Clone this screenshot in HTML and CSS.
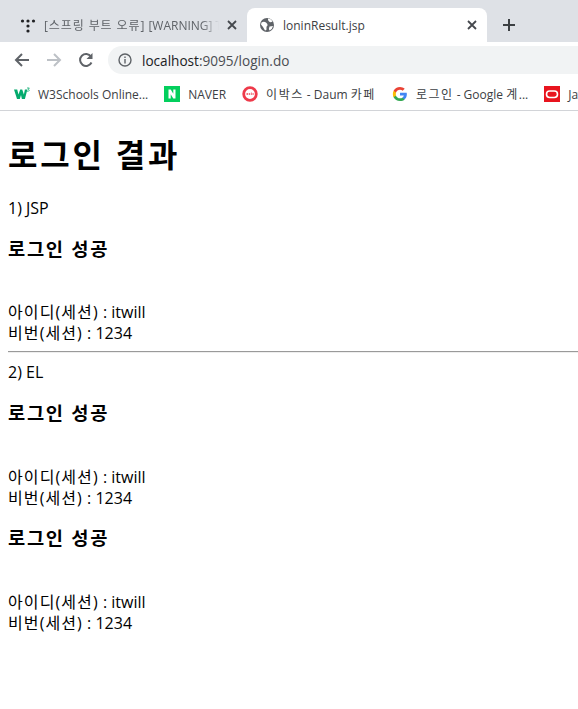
FILE: index.html
```html
<!DOCTYPE html>
<html lang="ko">
<head>
<meta charset="UTF-8">
<title>loninResult.jsp</title>
<link rel="stylesheet" href="styles.css">
</head>
<body>

<div class="browser">
    <div class="tabstrip">
        <div class="tab">
            <svg class="favicon" width="16" height="16" viewBox="0 0 16 16"><g fill="#202124"><circle cx="2.500" cy="4" r="1.600"/><circle cx="8" cy="4" r="1.600"/><circle cx="13.500" cy="4" r="1.600"/><circle cx="8" cy="9" r="1.600"/><circle cx="8" cy="14" r="1.600"/></g></svg>
            <span class="tab-title fade"><span class="ko">[스프링 부트 오류]</span> [WARNING] The POM for</span>
            <svg class="tab-close" width="10" height="10" viewBox="0 0 10 10"><path d="M1 1l8 8M9 1l-8 8" stroke="#45484d" stroke-width="1.800"/></svg>
        </div>
        <div class="tab active">
            <svg class="favicon" width="16" height="16" viewBox="0 0 16 16"><circle cx="8" cy="8" r="7" fill="#5f6368"/><path d="M2.500 5.500q2.500-1.500 4.500 0t1.500 3q-1.500 1-1 3t-1.500 2q-1-2-2-3.500t-2-2.500zM9 1.500q3 0 4.500 3-2 1.500-3.500 0t-1-3zM10.500 9.500l3.500-.5q-.5 3-3.500 4.500-1-2 0-4z" fill="#fff"/></svg>
            <span class="tab-title">loninResult.jsp</span>
            <svg class="tab-close" width="10" height="10" viewBox="0 0 10 10"><path d="M1 1l8 8M9 1l-8 8" stroke="#45484d" stroke-width="1.800"/></svg>
        </div>
        <svg class="new-tab" width="12" height="12" viewBox="0 0 12 12"><path d="M6 0v12M0 6h12" stroke="#3c4043" stroke-width="2"/></svg>
    </div>

    <div class="toolbar">
        <svg class="nav-icon" width="16" height="16" viewBox="0 0 16 16"><path d="M15 8H2M8 2L2 8l6 6" fill="none" stroke="#5f6368" stroke-width="2"/></svg>
        <svg class="nav-icon" width="16" height="16" viewBox="0 0 16 16"><path d="M1 8h13M8 2l6 6-6 6" fill="none" stroke="#bdc1c6" stroke-width="2"/></svg>
        <svg class="nav-icon" width="16" height="16" viewBox="0 0 16 16"><path d="M13.500 10.500A6 6 0 1 1 13 4.500" fill="none" stroke="#5f6368" stroke-width="2"/><path d="M14.500 1v6h-6z" fill="#5f6368"/></svg>
        <div class="omnibox">
            <svg width="14" height="14" viewBox="0 0 14 14"><circle cx="7" cy="7" r="6" fill="none" stroke="#5f6368" stroke-width="1.400"/><rect x="6.300" y="6" width="1.400" height="4.500" fill="#5f6368"/><rect x="6.300" y="3.500" width="1.400" height="1.500" fill="#5f6368"/></svg>
            <span class="url">localhost<span class="url-path">:9095/login.do</span></span>
        </div>
    </div>

    <div class="bookmarks">
        <div class="bookmark">
            <svg width="16" height="16" viewBox="0 0 16 16"><path d="M0 3.500h3.200l1.300 5 1.700-5h2l1.700 5 1-5h2.500l-2.500 9.500H7.900L7 9l-1.200 4H3z" fill="#04aa6d"/><path d="M13 2h2.300l-1 1.300q1 .3.900 1.200t-2.200.7" fill="none" stroke="#04aa6d" stroke-width=".8"/></svg>
            <span>W3Schools Online...</span>
        </div>
        <div class="bookmark">
            <svg width="16" height="16" viewBox="0 0 16 16"><rect width="16" height="16" fill="#03cf5d"/><path d="M4.500 12.500v-9h2.200l2.600 4.200V3.500h2.200v9H9.300L6.700 8.300v4.200z" fill="#fff"/></svg>
            <span>NAVER</span>
        </div>
        <div class="bookmark">
            <svg width="16" height="16" viewBox="0 0 16 16"><circle cx="8" cy="8" r="6.300" fill="none" stroke="#ee3a4a" stroke-width="2.800"/><g fill="#f2727e"><rect x="4.500" y="7" width="1.500" height="2"/><rect x="6.700" y="7" width="1.500" height="2"/><rect x="8.900" y="6.500" width="1" height="2.500"/><rect x="10.500" y="7" width="1.200" height="2"/></g></svg>
            <span><span class="ko">이박스</span> - Daum <span class="ko">카페</span></span>
        </div>
        <div class="bookmark">
            <svg width="16" height="16" viewBox="-1 -1 18 18"><path d="M15.700 8.200c0-.6-.1-1.100-.2-1.600H8v3h4.300c-.2 1-.8 1.800-1.600 2.400v2h2.600c1.500-1.400 2.400-3.400 2.400-5.800z" fill="#4285f4"/><path d="M8 16c2.200 0 4-.7 5.300-1.900l-2.600-2c-.7.500-1.600.8-2.700.8-2.100 0-3.900-1.400-4.500-3.300H.8v2.100C2.100 14.300 4.800 16 8 16z" fill="#34a853"/><path d="M3.500 9.600c-.3-1-.3-2.200 0-3.200V4.300H.8c-1.100 2.200-1.100 5.200 0 7.400z" fill="#fbbc05"/><path d="M8 3.200c1.200 0 2.200.4 3 1.200l2.300-2.300C11.900.8 10.100 0 8 0 4.800 0 2.100 1.700.8 4.300l2.700 2.100C4.100 4.500 5.900 3.200 8 3.200z" fill="#ea4335"/></svg>
            <span><span class="ko">로그인</span> - Google <span class="ko">계</span>...</span>
        </div>
        <div class="bookmark">
            <svg width="16" height="16" viewBox="0 0 16 16"><rect width="16" height="16" fill="#e8141e"/><rect x="2.500" y="5" width="11" height="6.500" rx="3.200" fill="none" stroke="#fff" stroke-width="1.600"/></svg>
            <span>Java</span>
        </div>
    </div>
</div>

<div class="page">
    <h1>로그인 결과</h1>

    1) JSP
    <h3>로그인 성공</h3>
    <br>
    <span class="ko">아이디(세션)</span> : itwill<br>
    <span class="ko">비번(세션)</span> : 1234<br>
    <hr>
    2) EL
    <h3>로그인 성공</h3>
    <br>
    <span class="ko">아이디(세션)</span> : itwill<br>
    <span class="ko">비번(세션)</span> : 1234<br>
    <h3>로그인 성공</h3>
    <br>
    <span class="ko">아이디(세션)</span> : itwill<br>
    <span class="ko">비번(세션)</span> : 1234<br>
</div>

</body>
</html>
```

FILE: styles.css
```css
body {
    margin: 0;
    background-color: #fff;
    font-family: "Open Sans", "Noto Sans CJK KR", sans-serif;
    overflow: hidden;
}

.browser {
    border-bottom: 1px solid #d2d4d8;
    overflow: hidden;
}

.tabstrip {
    display: flex;
    align-items: flex-end;
    height: 42px;
    padding-left: 8px;
    background-color: #dee1e6;
    box-sizing: border-box;
}
.tab {
    display: flex;
    align-items: center;
    width: 239px;
    height: 34px;
    padding: 0 10px 0 12px;
    box-sizing: border-box;
    font-size: 12px;
    color: #5f6368;
}
.tab.active {
    width: 240px;
    background-color: #fff;
    border-radius: 8px 8px 0 0;
    color: #3c4043;
}
.favicon {
    flex: none;
    margin-right: 8px;
}
.tab-title {
    flex: 1;
    min-width: 0;
    overflow: hidden;
    white-space: nowrap;
}
.tab-title.fade {
    -webkit-mask-image: linear-gradient(to right, #000 90%, transparent);
    mask-image: linear-gradient(to right, #000 90%, transparent);
}
.tab-title .ko {
    letter-spacing: 0.900px;
}
.tab-close {
    flex: none;
    margin-left: 8px;
}
.new-tab {
    margin: 0 0 11px 16px;
}
.ko {
    letter-spacing: 1.500px;
}

.toolbar {
    display: flex;
    align-items: center;
    height: 36px;
    padding-left: 14px;
    background-color: #fff;
}
.nav-icon {
    margin-right: 16px;
}
.nav-icon:nth-child(3) {
    margin-right: 14px;
}
.omnibox {
    display: flex;
    align-items: center;
    flex: 1;
    height: 28px;
    padding-left: 10px;
    background-color: #f1f3f4;
    border-radius: 14px 0 0 14px;
}
.url {
    margin-left: 10px;
    font-size: 13.600px;
    color: #202124;
}
.url-path {
    color: #4a4d52;
}

.bookmarks {
    display: flex;
    align-items: center;
    height: 32px;
    padding-left: 14px;
    background-color: #fff;
    white-space: nowrap;
}
.bookmark {
    display: flex;
    align-items: center;
    flex: none;
    gap: 8px;
    margin-right: 16px;
    font-size: 12px;
    color: #3c4043;
}

.page {
    padding: 8px 0 8px 8px;
    font-size: 16px;
    line-height: 21px;
    color: #000;
}
.page .ko {
    letter-spacing: 1.100px;
}
h1 {
    margin: 18px 0 25px;
    font-size: 32px;
    line-height: 36px;
    letter-spacing: 2.800px;
}
h3 {
    margin: 18px 0 20px;
    font-size: 18.720px;
    line-height: 24px;
    letter-spacing: 1.700px;
}
hr ~ h3 {
    margin-bottom: 21px;
}
hr ~ h3 ~ h3 {
    margin: 17px 0 21px;
}
hr {
    margin: 7px 0 9px;
    border: 0;
    border-top: 1px solid #9a9a9a;
    border-bottom: 1px solid #eee;
}
```
